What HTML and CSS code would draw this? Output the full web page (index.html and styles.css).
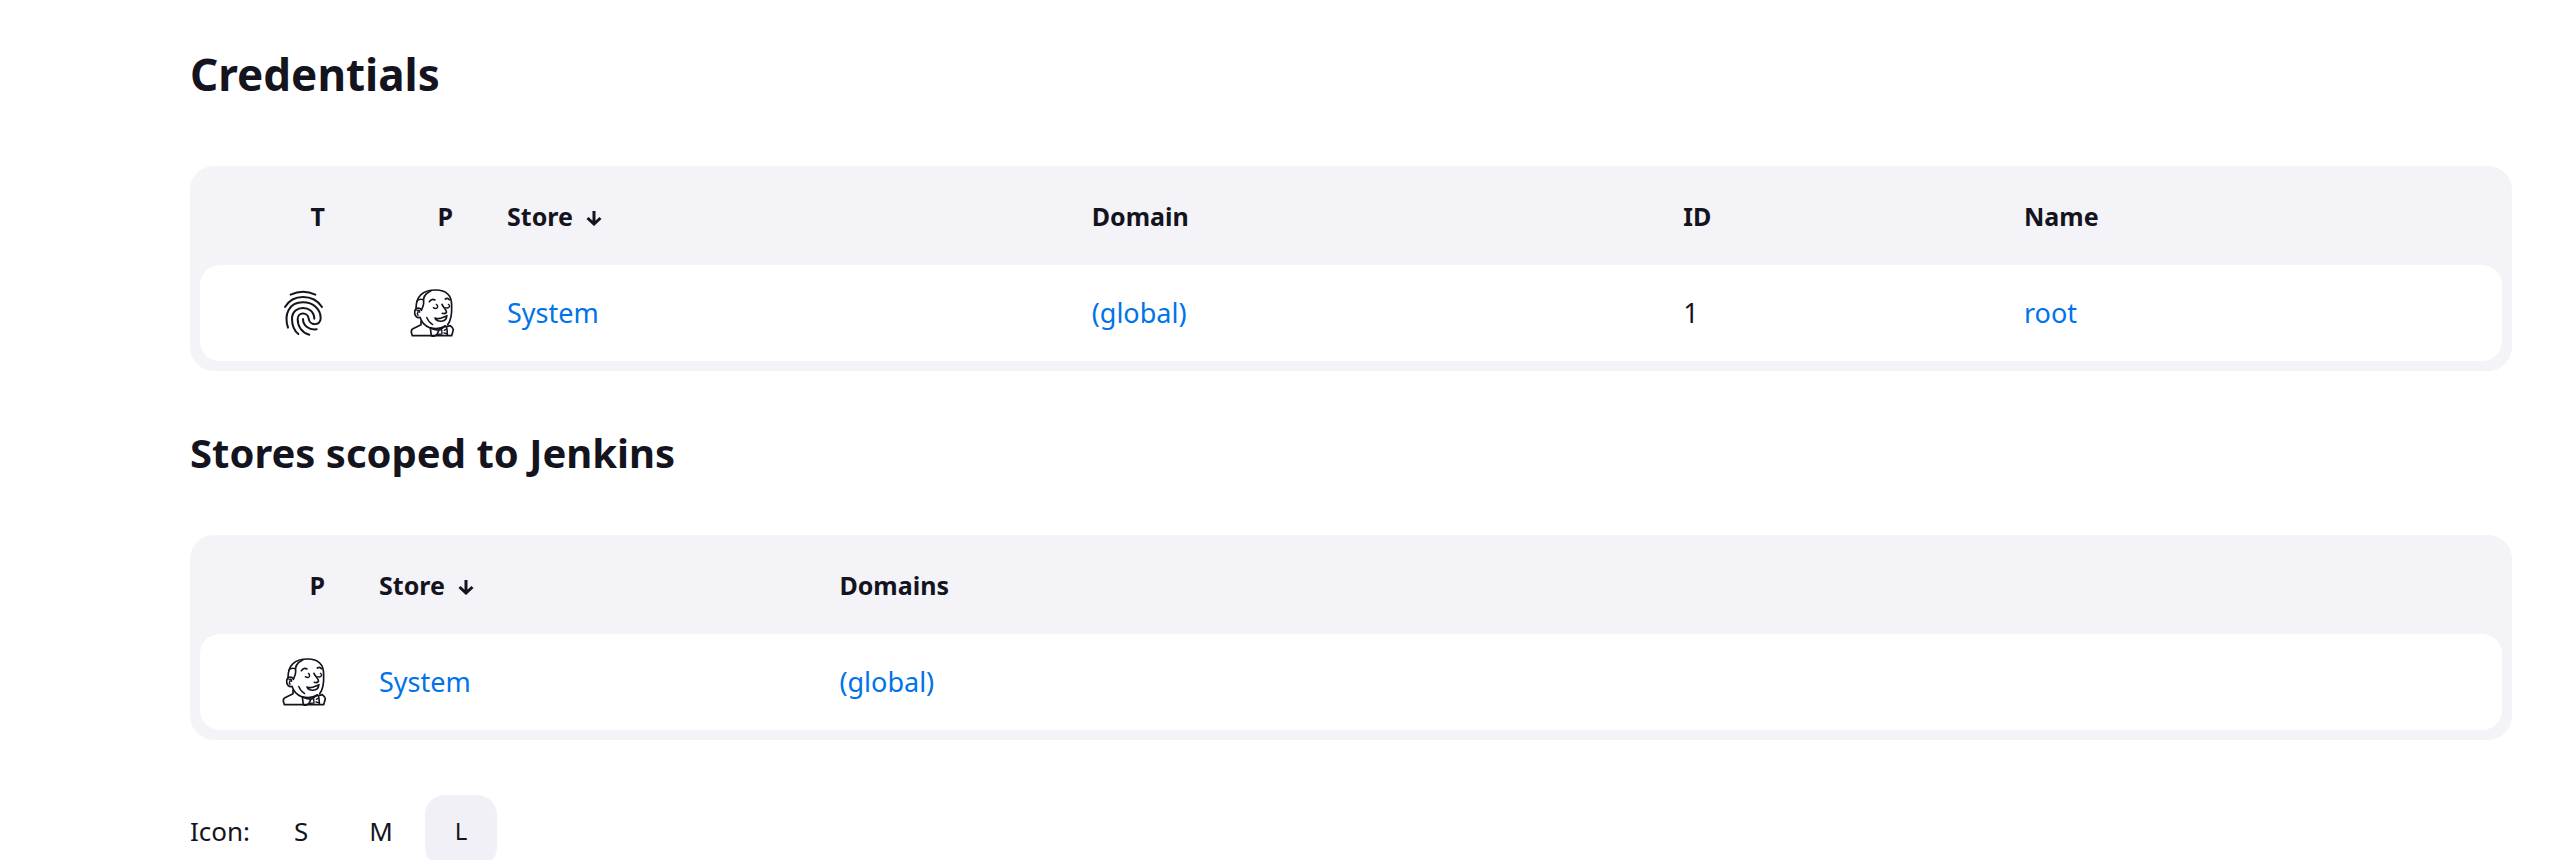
FILE: index.html
```html
<!DOCTYPE html>
<html lang="en">
<head>
<meta charset="utf-8">
<meta name="viewport" content="width=device-width, initial-scale=1">
<title>Credentials</title>
<link rel="stylesheet" href="styles.css">
</head>
<body>
<svg class="sprite" aria-hidden="true">
  <symbol id="arrow" viewBox="0 0 16 16">
    <path d="M8 1V14M1.5 8L8 14L14.5 8"/>
  </symbol>
  <symbol id="fingerprint" viewBox="30 42 144 144">
    <path d="M65 59Q102 42 139 59"/>
    <path d="M48 96C60 76 79 66 102 66C126 66 146 76 159 96"/>
    <path d="M57 158C44 118 60 82 102 82C134 82 155 104 155 130C155 153 121 153 119 131C117 110 86 110 86 132C86 156 100 173 121 179"/>
    <path d="M136 131C134 88 70 88 69 131C69 152 76 167 88 177"/>
    <path d="M102 132C102 152 120 166 143 163"/>
  </symbol>
  <symbol id="jenkins" viewBox="36 42 144 144">
    <path d="M63 101C63 66 80 45 122 45C154 45 170 62 170 92C171 116 168 136 158 149"/>
    <path d="M107 48C88 57 83 70 86 84C86 92 83 98 79 106"/>
    <path d="M65 80Q70 70 84 74" class="thin"/>
    <path d="M79 104C73 96 60 98 59 111C58 123 67 130 75 127C79 141 90 153 104 158C122 163 140 160 151 153"/>
    <path d="M66 107Q74 103 74 112M70 110Q65 115 69 121" class="thin"/>
    <path d="M95 127Q100 141 113 149" class="thin"/>
    <path d="M103 80Q110 70 120 75M151 72Q158 67 163 74"/>
    <path d="M115 98Q122 103 127 98M127 98Q130 93 124 88M152 98Q160 101 164 94Q164 91 160 88" class="thin"/>
    <path d="M141 88C145 98 157 105 154 113Q149 118 142 115"/>
    <path d="M120 129Q131 134 145 127Q152 124 156 122M120 129C125 142 153 143 155 125"/>
    <path d="M78 139V149L54 161Q48 164 49 172L52 182H170L175 164Q173 156 166 152L155 155"/>
    <path d="M106 159L109 182Q116 187 126 178L132 165Q120 166 106 159ZM138 162L151 153Q157 156 157 180"/>
    <path d="M132 165L140 164L141 177L128 178M148 166L155 162M147 174L156 176" class="thin"/>
  </symbol>
</svg>
<main class="page">
  <h1 class="title">Credentials</h1>
  <table class="panel">
    <thead>
      <tr>
        <th class="type" scope="col">T</th>
        <th class="provider" scope="col">P</th>
        <th class="store" scope="col">Store <svg class="arrow" aria-hidden="true"><use href="#arrow"/></svg></th>
        <th class="domain" scope="col">Domain</th>
        <th class="ident" scope="col">ID</th>
        <th scope="col">Name</th>
      </tr>
    </thead>
    <tbody>
      <tr>
        <td class="type"><svg class="icon finger" role="img" aria-label="Credential type"><use href="#fingerprint"/></svg></td>
        <td class="provider"><svg class="icon" role="img" aria-label="Provider"><use href="#jenkins"/></svg></td>
        <td><a href="#system">System</a></td>
        <td><a href="#global">(global)</a></td>
        <td>1</td>
        <td><a href="#root">root</a></td>
      </tr>
    </tbody>
  </table>
  <h2 class="subtitle">Stores scoped to Jenkins</h2>
  <table class="panel">
    <thead>
      <tr>
        <th class="type" scope="col">P</th>
        <th class="scoped" scope="col">Store <svg class="arrow" aria-hidden="true"><use href="#arrow"/></svg></th>
        <th scope="col">Domains</th>
      </tr>
    </thead>
    <tbody>
      <tr>
        <td class="type"><svg class="icon" role="img" aria-label="Provider"><use href="#jenkins"/></svg></td>
        <td><a href="#system">System</a></td>
        <td><a href="#global">(global)</a></td>
      </tr>
    </tbody>
  </table>
  <div class="sizes">
    <span class="label">Icon:</span>
    <button class="size" type="button">S</button>
    <button class="size" type="button">M</button>
    <button class="size current" type="button" aria-pressed="true">L</button>
  </div>
</main>
</body>
</html>
```
FILE: styles.css
```css
* { box-sizing: border-box; }
body {
  margin: 0;
  background: #fff;
  color: #14141f;
  font: 26px/36px "Noto Sans", "Open Sans", sans-serif;
}
.sprite { position: absolute; width: 0; height: 0; }
.page { padding: 44px 45px 0 190px; }
.title, .subtitle { margin: 0; font-weight: 700; }
.title { font-size: 44px; line-height: 60px; margin-bottom: 62px; }
.subtitle { font-size: 40px; line-height: 56px; margin: 54px 0; }
.panel {
  width: 100%;
  table-layout: fixed;
  border-collapse: separate;
  border-spacing: 0;
  padding: 0 10px 10px;
  border-radius: 24px;
  background: #f3f3f8;
}
th, td { padding: 0 26px; text-align: left; vertical-align: middle; }
th { height: 99px; font-size: 25px; font-weight: 700; }
td { height: 96px; font-size: 27px; background: #fff; }
td:first-child { border-radius: 20px 0 0 20px; }
td:last-child { border-radius: 0 20px 20px 0; }
.type { width: 153px; text-align: right; }
.provider { width: 128px; text-align: right; }
th.type, th.provider { padding-right: 28px; }
.store { width: 25.4%; }
.domain { width: 25.7%; }
.ident { width: 14.8%; }
.scoped { width: 20%; }
a { color: #0073ea; text-decoration: none; }
.icon, .arrow { fill: none; stroke: currentColor; stroke-linecap: round; stroke-linejoin: round; }
.icon { display: block; width: 48px; height: 48px; margin-left: auto; stroke-width: 5; }
.finger { stroke-width: 6; }
.thin { stroke-width: 4; }
.arrow { width: 16px; height: 16px; margin-left: 7px; stroke-width: 3; stroke-linecap: butt; stroke-linejoin: miter; }
.sizes { display: flex; align-items: center; gap: 8px; margin-top: 55px; }
.label { margin-right: 7px; }
.size {
  width: 72px;
  height: 72px;
  padding: 0;
  border: 0;
  border-radius: 20px;
  background: transparent;
  color: inherit;
  font: inherit;
}
.current { background: #f1f0f7; font-size: 24px; }
```
